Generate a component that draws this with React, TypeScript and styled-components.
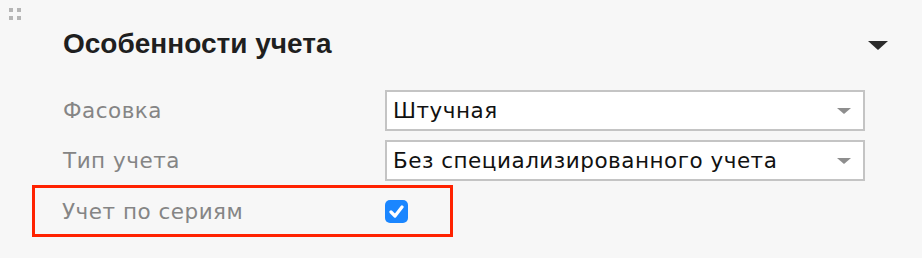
import * as React from 'react';
import styled, { createGlobalStyle } from 'styled-components';

const GlobalStyle = createGlobalStyle`
    html, body {
        margin: 0;
        padding: 0;
        background: #f7f7f7;
    }
    body {
        font-family: 'DejaVu Sans', 'Liberation Sans', Arial, sans-serif;
    }
`;

const Panel = styled.div`
    width: 922px;
    height: 258px;
    box-sizing: border-box;
    padding: 8px 0 0 9px;
    overflow: hidden;
`;

const Grip = styled.div`
    display: grid;
    grid-template-columns: repeat(2, 4px);
    grid-auto-rows: 4px;
    gap: 4px;
    width: 12px;

    & > span {
        background: #b5b5b5;
    }
`;

const Body = styled.div`
    padding-left: 23px;
`;

const Header = styled.div`
    display: flex;
    align-items: center;
    justify-content: space-between;
    width: 856px;
    padding-left: 31px;
    box-sizing: border-box;
    margin-top: 4px;
    height: 40px;
`;

const Title = styled.h2`
    margin: 0;
    font-family: 'Liberation Sans', Arial, sans-serif;
    font-size: 28px;
    font-weight: bold;
    color: #1f1f1f;
`;

const Collapse = styled.div`
    width: 0;
    height: 0;
    margin-top: 2px;
    border-left: 10px solid transparent;
    border-right: 10px solid transparent;
    border-top: 9px solid #2b2b2b;
`;

const Fields = styled.div`
    display: flex;
    flex-direction: column;
    gap: 9px;
    margin-top: 26px;
    padding-left: 31px;
`;

const Row = styled.div`
    display: grid;
    grid-template-columns: 322px 480px;
    align-items: center;
`;

const Label = styled.span`
    font-size: 21.5px;
    letter-spacing: 0.5px;
    color: #858585;
`;

const Select = styled.div`
    position: relative;
    height: 41px;
    box-sizing: border-box;
    border: 2px solid #c4c4c4;
    background: #fff;
    display: flex;
    align-items: center;
    padding: 0 40px 0 6px;
    font-size: 21.5px;
    letter-spacing: 0.5px;
    color: #111;

    &::after {
        content: '';
        position: absolute;
        right: 12px;
        top: 50%;
        margin-top: -3px;
        border-left: 7px solid transparent;
        border-right: 7px solid transparent;
        border-top: 6px solid #8e8e8e;
    }
`;

const Highlight = styled.div`
    display: grid;
    grid-template-columns: 323px auto;
    align-items: center;
    width: 421px;
    height: 52px;
    box-sizing: border-box;
    margin-left: -31px;
    margin-top: -5px;
    border: 3px solid #ff2200;
    padding-left: 27px;
`;

const Checkbox = styled.div<{ checked?: boolean }>`
    width: 23px;
    height: 23px;
    border-radius: 5px;
    background: ${(p) => (p.checked ? '#1a86ff' : '#fff')};
    display: flex;
    align-items: center;
    justify-content: center;
`;

const App: React.FC = () => {
    return (
        <Panel>
            <GlobalStyle />
            <Grip>
                <span />
                <span />
                <span />
                <span />
            </Grip>
            <Body>
                <Header>
                    <Title>Особенности учета</Title>
                    <Collapse />
                </Header>
                <Fields>
                    <Row>
                        <Label>Фасовка</Label>
                        <Select>Штучная</Select>
                    </Row>
                    <Row>
                        <Label>Тип учета</Label>
                        <Select>Без специализированного учета</Select>
                    </Row>
                    <Highlight>
                        <Label>Учет по сериям</Label>
                        <Checkbox checked>
                            <svg width="15" height="13" viewBox="0 0 15 13">
                                <path
                                    d="M2 7 L6 11 L13 2"
                                    fill="none"
                                    stroke="#fff"
                                    strokeWidth="3.2"
                                    strokeLinecap="round"
                                    strokeLinejoin="round"
                                />
                            </svg>
                        </Checkbox>
                    </Highlight>
                </Fields>
            </Body>
        </Panel>
    );
};

export default App;
